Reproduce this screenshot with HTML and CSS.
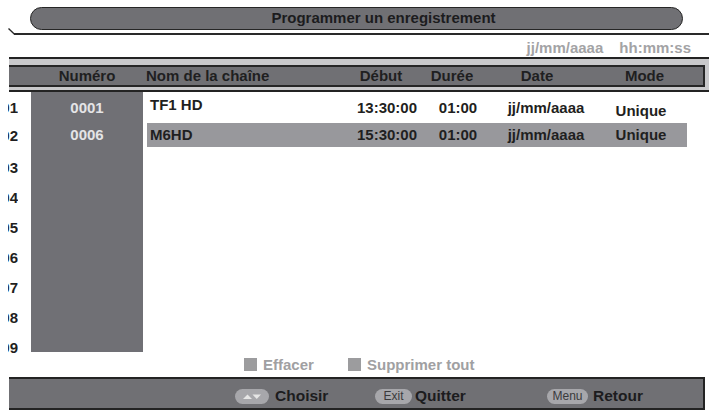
FILE: index.html
```html
<!DOCTYPE html>
<html lang="fr">
<head>
<meta charset="utf-8">
<title>Programmer un enregistrement</title>
<link rel="stylesheet" href="styles.css">
</head>
<body>
<div class="screen">
  <div class="title">Programmer un enregistrement</div>
  <div class="rule-row">
    <svg class="diag" width="7" height="7" viewBox="0 0 7 7"><line x1="0.5" y1="0.5" x2="6.5" y2="6.2" stroke="#2a2a2a" stroke-width="1.4"/></svg>
    <div class="rule"></div>
  </div>
  <div class="hint"><span>jj/mm/aaaa</span><span>hh:mm:ss</span></div>
  <div class="band">
    <div class="band-inner">
      <span></span>
      <span class="c">Numéro</span>
      <span></span>
      <span class="l">Nom de la chaîne</span>
      <span class="c">Début</span>
      <span class="c">Durée</span>
      <span class="c">Date</span>
      <span class="c">Mode</span>
    </div>
  </div>
  <div class="main">
    <div class="idx">
      <div class="ir r1"><span>01</span></div>
      <div class="ir r2"><span>02</span></div>
      <div class="ir"><span>03</span></div>
      <div class="ir"><span>04</span></div>
      <div class="ir"><span>05</span></div>
      <div class="ir"><span>06</span></div>
      <div class="ir"><span>07</span></div>
      <div class="ir"><span>08</span></div>
      <div class="ir"><span>09</span></div>
    </div>
    <div class="numcol">
      <div class="nr r1">0001</div>
      <div class="nr r2">0006</div>
    </div>
    <div class="data">
      <div class="row r1">
        <span class="nm up">TF1 HD</span>
        <span class="c">13:30:00</span>
        <span class="c">01:00</span>
        <span class="c">jj/mm/aaaa</span>
        <span class="c dn">Unique</span>
      </div>
      <div class="row r2 sel">
        <span class="nm">M6HD</span>
        <span class="c">15:30:00</span>
        <span class="c">01:00</span>
        <span class="c">jj/mm/aaaa</span>
        <span class="c">Unique</span>
      </div>
    </div>
  </div>
  <div class="legend">
    <div class="lg"><span class="sq"></span><span>Effacer</span></div>
    <div class="lg"><span class="sq"></span><span>Supprimer tout</span></div>
  </div>
  <div class="bar">
    <div class="grp">
      <svg class="arrows" width="34" height="15" viewBox="0 0 34 15"><rect x="0" y="0" width="34" height="15" rx="7.5" fill="#a7a7ab"/><polygon points="8,10 17,10 12.5,5.5" fill="#e6e6e6"/><polygon points="17.5,5.5 26,5.5 21.75,10" fill="#e6e6e6"/></svg>
      <span class="lbl">Choisir</span>
    </div>
    <div class="grp">
      <span class="key k-exit">Exit</span>
      <span class="lbl">Quitter</span>
    </div>
    <div class="grp">
      <span class="key k-menu">Menu</span>
      <span class="lbl">Retour</span>
    </div>
  </div>
</div>
</body>
</html>
```
FILE: styles.css
```css
* { box-sizing: border-box; }
html, body { margin: 0; padding: 0; background: #ffffff; }
body {
  font-family: "Liberation Sans", Arial, sans-serif;
  font-weight: bold;
  font-size: 15px;
  color: #1f1f21;
  width: 709px;
  height: 412px;
  overflow: hidden;
}
.screen { display: flex; flex-direction: column; }

.title {
  margin: 7px 0 0 30px;
  width: 653px;
  height: 23px;
  border: 1.5px solid #262626;
  border-radius: 12px;
  background: #707074;
  text-align: center;
  padding-left: 54px;
  line-height: 20px;
  font-size: 15px;
  color: #1c1c1e;
}

.rule-row {
  display: flex;
  align-items: flex-end;
  height: 7px;
  margin-top: -2px;
  padding-left: 8px;
}
.diag { display: block; flex: none; }
.rule { flex: 1; border-bottom: 2px solid #2a2a2a; margin-left: -1px; }

.hint {
  height: 22px;
  padding-top: 4px;
  padding-right: 18px;
  display: flex;
  justify-content: flex-end;
  gap: 16px;
  line-height: 17px;
  color: #a3a3a5;
}

.band {
  margin-left: 9px;
  border-top: 2px solid #232323;
  border-bottom: 2px solid #232323;
  background: #c9c9cb;
  padding: 6px 4px 3px 0;
}
.band-inner {
  display: grid;
  grid-template-columns: 22px 112px 3px 200px 70px 72px 98px 1fr;
  height: 22px;
  border-top: 2px solid #262626;
  border-bottom: 2px solid #262626;
  border-right: 2px solid #262626;
  background: #707074;
  line-height: 18px;
  color: #1f1f21;
}
.c { text-align: center; }
.l { text-align: left; }

.main {
  display: flex;
  align-items: flex-start;
  height: 265px;
}
.idx {
  width: 10px;
  margin-left: 8px;
  overflow: hidden;
  padding-top: 1px;
  color: #1f1f21;
}
.ir {
  display: flex;
  justify-content: flex-end;
  height: 30px;
  line-height: 30px;
  white-space: nowrap;
}
.ir.r2 { height: 30px; line-height: 26px; }
.numcol {
  width: 112px;
  margin-left: 13px;
  height: 260px;
  background: #707075;
  padding-top: 1px;
  color: #e4e4e6;
}
.nr { text-align: center; }
.r1 { height: 30px; line-height: 30px; }
.r2 { height: 24px; line-height: 24px; }
.ir.r1 { height: 30px; line-height: 30px; }

.data {
  width: 540px;
  margin-left: 4px;
  padding-top: 1px;
}
.row {
  display: grid;
  grid-template-columns: 205px 70px 72px 104px 1fr;
  padding-right: 3px;
}
.row .nm { padding-left: 3px; }
.row .up { line-height: 24px; }
.row .dn { line-height: 36px; }
.sel { background: #98989c; }

.legend {
  height: 16px;
  padding-left: 244px;
  display: grid;
  grid-template-columns: 104px 1fr;
  color: #a0a0a2;
  line-height: 16px;
}
.lg { display: flex; align-items: center; gap: 6px; }
.sq { width: 13px; height: 13px; background: #9c9c9e; flex: none; margin-top: -2px; }

.bar {
  margin: 4px 0 0 9px;
  width: 696px;
  height: 33px;
  border-top: 2px solid #232323;
  border-bottom: 2px solid #232323;
  border-right: 2px solid #232323;
  background: #707074;
  display: grid;
  grid-template-columns: 140px 172px 1fr;
  padding-left: 226px;
  padding-top: 9px;
}
.grp { display: flex; align-items: center; height: 16px; }
.arrows { display: block; flex: none; margin-right: 6px; }
.lbl { font-size: 15.5px; line-height: 16px; color: #1c1c1e; }
.key {
  height: 15px;
  line-height: 15px;
  border-radius: 8px;
  background: #a7a7ab;
  color: #3a3a3c;
  font-weight: normal;
  font-size: 12px;
  text-align: center;
  flex: none;
}
.k-exit { width: 37px; margin-right: 3px; }
.k-menu { width: 41px; margin-right: 5px; }
```
